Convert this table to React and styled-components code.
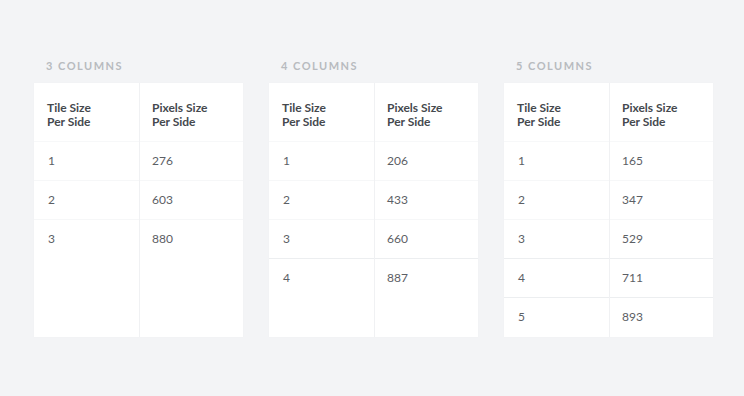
import React from "react";
import styled, { createGlobalStyle } from "styled-components";

const Global = createGlobalStyle`
  html, body { margin: 0; padding: 0; background: #f3f4f6; }
  body { font-family: Lato, "Open Sans", "Liberation Sans", sans-serif; -webkit-font-smoothing: antialiased; }
`;

const Page = styled.div`
  width: 744px;
  height: 396px;
  box-sizing: border-box;
  padding: 59px 0 0 34px;
  display: flex;
  gap: 26px;
  background: #f3f4f6;
`;

const Group = styled.section`
  display: flex;
  flex-direction: column;
  width: 209px;
`;

const Label = styled.div`
  font-size: 11px;
  line-height: 14px;
  font-weight: 700;
  letter-spacing: 1.5px;
  color: #b8bbbf;
  padding-left: 12px;
  margin-bottom: 10px;
`;

const Card = styled.div`
  display: flex;
  height: 254px;
  background: #ffffff;
  box-shadow: 0 0 3px rgba(0, 0, 0, 0.02);
`;

const Column = styled.div`
  display: flex;
  flex-direction: column;
  width: ${(p) => p.$w}px;
  flex: ${(p) => (p.$grow ? 1 : "none")};
  border-right: ${(p) => (p.$divider ? "1px solid #f0f1f3" : "none")};
`;

const HeadCell = styled.div`
  height: 59px;
  box-sizing: border-box;
  padding: 5px 0 0 ${(p) => p.$pad}px;
  display: flex;
  align-items: center;
  font-size: 12px;
  line-height: 14px;
  font-weight: 700;
  color: #45494e;
  border-bottom: 1px solid #f7f8f9;
`;

const Cell = styled.div`
  height: 39px;
  box-sizing: border-box;
  padding: 0 0 1px ${(p) => p.$pad}px;
  display: flex;
  align-items: center;
  font-size: 12px;
  color: #5c6065;
  border-bottom: 1px solid ${(p) => (p.$last ? "transparent" : p.$strong ? "#eceef0" : "#f6f7f8")};
`;

const data = [
  { label: "3 COLUMNS", rows: [["1", "276"], ["2", "603"], ["3", "880"]] },
  {
    label: "4 COLUMNS",
    rows: [["1", "206"], ["2", "433"], ["3", "660"], ["4", "887"]],
  },
  {
    label: "5 COLUMNS",
    rows: [["1", "165"], ["2", "347"], ["3", "529"], ["4", "711"], ["5", "893"]],
  },
];

function Table({ label, rows }) {
  return (
    <Group>
      <Label>{label}</Label>
      <Card>
        <Column $w={105} $divider>
          <HeadCell $pad={13}>
            Tile Size
            <br />
            Per Side
          </HeadCell>
          {rows.map((r, i) => (
            <Cell key={i} $pad={14} $strong={i >= 2} $last={i === rows.length - 1}>
              {r[0]}
            </Cell>
          ))}
        </Column>
        <Column $grow>
          <HeadCell $pad={12}>
            Pixels Size
            <br />
            Per Side
          </HeadCell>
          {rows.map((r, i) => (
            <Cell key={i} $pad={12} $strong={i >= 2} $last={i === rows.length - 1}>
              {r[1]}
            </Cell>
          ))}
        </Column>
      </Card>
    </Group>
  );
}

export default function App() {
  return (
    <>
      <Global />
      <Page>
        {data.map((d) => (
          <Table key={d.label} {...d} />
        ))}
      </Page>
    </>
  );
}
